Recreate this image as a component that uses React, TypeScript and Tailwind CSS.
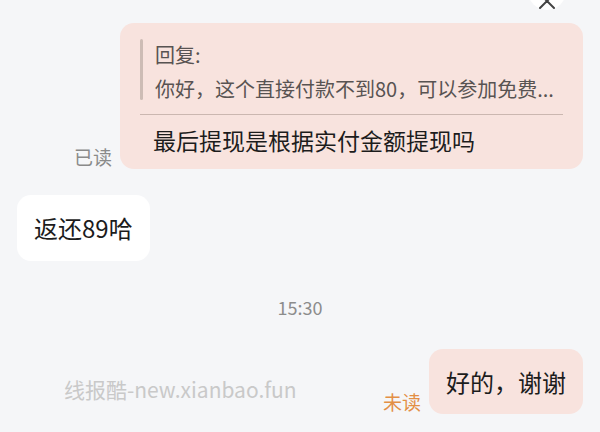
import React from "react";

const font = { fontFamily: '"Noto Sans CJK SC", "Noto Sans", sans-serif' };

function CloseButton() {
  return (
    <div className="absolute left-[528px] top-[-28px] flex h-[38px] w-[38px] items-center justify-center rounded-full bg-white">
      <svg width="18" height="18" viewBox="0 0 18 18" className="mt-[20px]">
        <path d="M2 2 L16 16 M16 2 L2 16" stroke="#444" strokeWidth="2" strokeLinecap="round" />
      </svg>
    </div>
  );
}

export default function App() {
  return (
    <div
      className="relative h-[432px] w-[600px] overflow-hidden bg-[#f5f6f8] px-[17px] pt-[23px]"
      style={font}
    >
      <CloseButton />

      {/* outgoing reply message */}
      <div className="flex items-end justify-end gap-[8px]">
        <span className="mb-[1px] text-[19px] leading-[22px] text-[#8a8a8a]">已读</span>
        <div className="w-[463px] rounded-[14px] bg-[#f8e3de] px-[20px] pb-[13px] pt-[16px]">
          <div className="flex">
            <div className="h-[61px] w-[3px] rounded-full bg-[#cdbcb5]" />
            <div className="-mt-[1px] pl-[12px] text-[20px] leading-[34px] text-[#585352]">
              <div>回复:</div>
              <div className="whitespace-nowrap">你好，这个直接付款不到80，可以参加免费...</div>
            </div>
          </div>
          <div className="mt-[8px] h-px bg-[#cbb7b0]" />
          <div className="mt-[9px] pl-[13px] text-[23px] leading-[32px] text-[#1c1c1c]">
            最后提现是根据实付金额提现吗
          </div>
        </div>
      </div>

      {/* incoming message */}
      <div className="mt-[26px] flex">
        <div className="flex h-[66px] items-center rounded-[14px] bg-white px-[17px] text-[24px] text-[#1c1c1c]">
          返还89哈
        </div>
      </div>

      <div className="mt-[35px] text-center text-[18px] leading-[22px] text-[#8c8c8c]">15:30</div>

      {/* outgoing message */}
      <div className="mt-[31px] flex items-end justify-end gap-[8px]">
        <span className="mb-[1px] text-[19px] leading-[22px] text-[#e38f45]">未读</span>
        <div className="flex h-[65px] items-center rounded-[14px] bg-[#f8e3de] px-[17px] text-[24px] text-[#1c1c1c]">
          好的，谢谢
        </div>
      </div>

      <div className="absolute left-[64px] top-[376px] text-[21px] leading-[26px] text-[#c9c9c9]">
        线报酷-new.xianbao.fun
      </div>
    </div>
  );
}
